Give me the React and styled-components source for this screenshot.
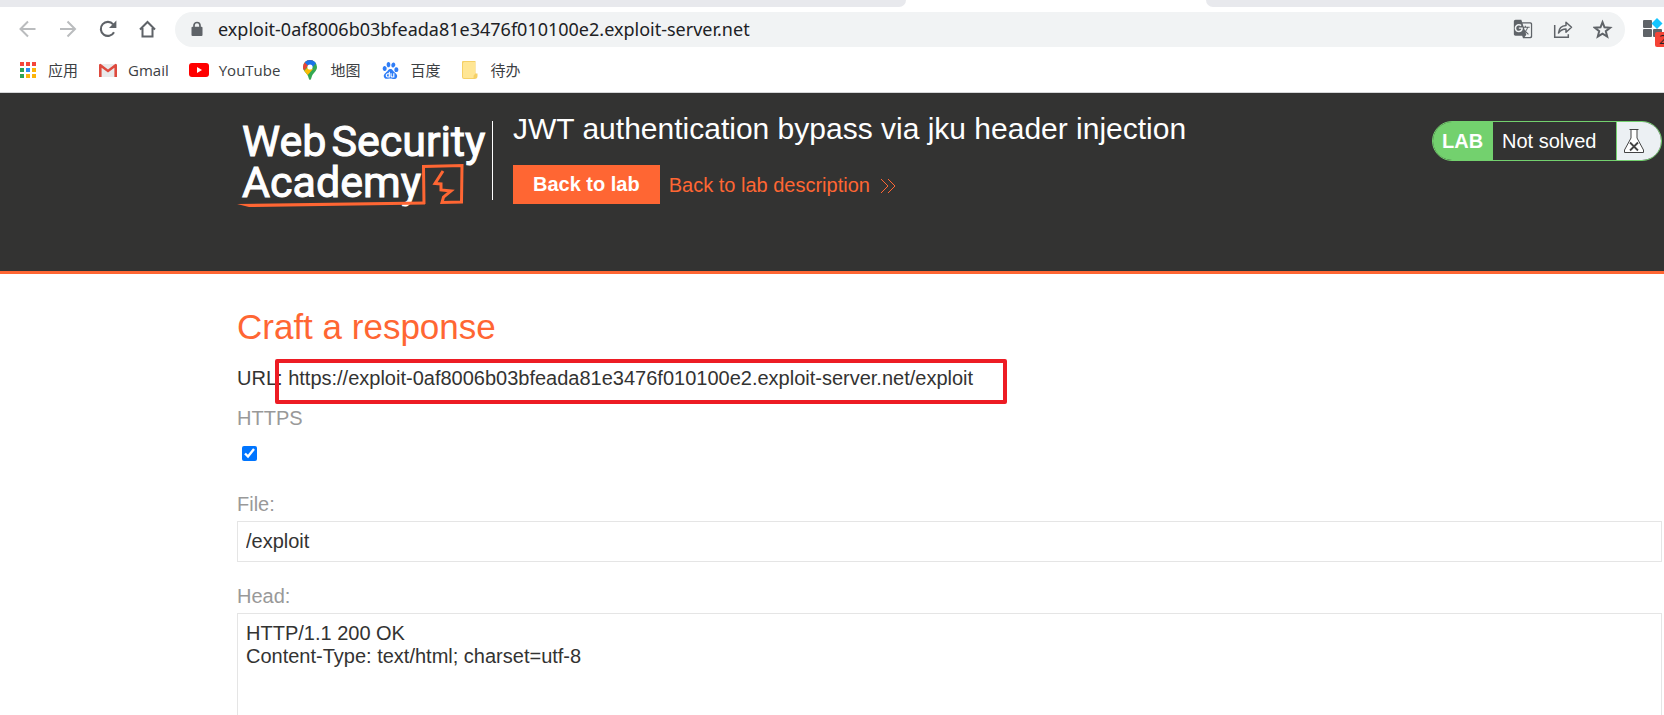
import React from "react";
import styled, { createGlobalStyle } from "styled-components";
import { MdGTranslate } from "react-icons/md";
import { SiBaidu } from "react-icons/si";

const orange = "#ff6633";
const green = "#73d16e";

const GlobalStyle = createGlobalStyle`
  *, *::before, *::after { box-sizing: border-box; }
  body {
    margin: 0;
    background: #fff;
    color: #333332;
    font-family: "Liberation Sans", Arial, sans-serif;
    font-size: 20px;
    line-height: 23px;
  }
`;

const Window = styled.div`
  display: flex;
  flex-direction: column;
  height: 100vh;
  overflow: hidden;
`;

const TabStrip = styled.div`
  display: flex;
  justify-content: space-between;
  flex: none;
  height: 7px;
`;

const TabEdge = styled.div`
  background: #e8e9ed;
  flex: ${(p) => p.$grow} 1 0;
  border-radius: ${(p) => (p.$side === "left" ? "0 0 12px 0" : "0 0 0 12px")};
`;

const ActiveTab = styled.div`
  flex: 0 0 300px;
`;

const Toolbar = styled.div`
  display: flex;
  align-items: center;
  flex: none;
  height: 45px;
  padding-left: 18px;
`;

const NavButtons = styled.div`
  display: flex;
  gap: 20px;
  padding: 0 17px 2px 0;
`;

const IconButton = styled.button`
  display: grid;
  place-items: center;
  width: 20px;
  height: 20px;
  padding: 0;
  border: 0;
  background: none;
  color: ${(p) => (p.$muted ? "#babcbe" : "#5f6368")};
`;

const Omnibox = styled.div`
  display: flex;
  align-items: center;
  flex: 1;
  min-width: 0;
  height: 35px;
  padding: 0 12px 2px 16px;
  gap: 15px;
  border-radius: 18px;
  background: #f1f3f4;
`;

const Address = styled.input`
  flex: 1;
  min-width: 0;
  padding: 0;
  border: 0;
  outline: 0;
  background: none;
  color: #202124;
  font: 18px/24px "Noto Sans", "Open Sans", sans-serif;
`;

const OmniActions = styled.div`
  display: flex;
  gap: 20px;
`;

const Extensions = styled.button`
  position: relative;
  flex: none;
  width: 39px;
  height: 35px;
  padding: 0 0 0 18px;
  border: 0;
  background: none;
  overflow: hidden;
  text-align: left;
`;

const Badge = styled.span`
  position: absolute;
  left: 30px;
  top: 20px;
  width: 20px;
  height: 15px;
  padding-left: 4px;
  border-radius: 2px;
  background: #f44336;
  color: #202124;
  font: 13px/15px "Open Sans", sans-serif;
`;

const Bookmarks = styled.nav`
  display: flex;
  align-items: center;
  flex: none;
  gap: 20px;
  height: 41px;
  padding: 0 18px 5px;
  border-bottom: 1px solid #d5d6d8;
`;

const Bookmark = styled.a`
  display: flex;
  align-items: center;
  gap: 10px;
  color: #3c4043;
  font: 15px/20px "Open Sans", "Noto Sans CJK SC", sans-serif;
  text-decoration: none;
  white-space: nowrap;
`;

const LabHeader = styled.header`
  display: flex;
  flex: none;
  height: 181px;
  padding: 20px 2px 0 237px;
  border-bottom: 3px solid ${orange};
  background: #333332;
`;

const Logo = styled.a`
  position: relative;
  flex: none;
  width: 256px;
  height: 79px;
  margin-top: 8px;
  padding-left: 5px;
  border-right: 1px solid #fff;
  color: #fff;
  font: 43px/41px "Roboto", sans-serif;
  -webkit-text-stroke: 1px #fff;
  text-decoration: none;
  white-space: nowrap;
`;

const LogoLine = styled.span`
  display: flex;
  gap: 5px;
`;

const LogoMark = styled.svg`
  position: absolute;
  left: 0;
  top: 40px;
`;

const LabInfo = styled.div`
  flex: 1;
  padding-left: 20px;
`;

const LabTitle = styled.h2`
  margin: 0;
  color: #fff;
  font-size: 30px;
  font-weight: 400;
  line-height: 32px;
`;

const LabActions = styled.div`
  display: flex;
  align-items: center;
  gap: 9px;
  margin-top: 20px;
`;

const Button = styled.button`
  height: 39px;
  padding: 0 20px;
  border: 0;
  background: ${orange};
  color: #fff;
  font: bold 20px/23px "Liberation Sans", Arial, sans-serif;
`;

const DescriptionLink = styled.a`
  display: flex;
  align-items: center;
  gap: 10px;
  padding-top: 2px;
  color: ${orange};
  text-decoration: none;
`;

const Status = styled.div`
  display: flex;
  flex: none;
  width: 230px;
  height: 40px;
  margin-top: 8px;
  border: 1px solid ${green};
  border-radius: 20px;
  overflow: hidden;
  color: #fff;
  line-height: 38px;
`;

const StatusTag = styled.strong`
  flex: none;
  width: 60px;
  padding-left: 9px;
  background: ${green};
`;

const StatusText = styled.span`
  flex: 1;
  padding-left: 9px;
`;

const StatusIcon = styled.span`
  display: flex;
  align-items: center;
  width: 45px;
  padding-left: 6px;
  border-left: 1px solid ${green};
  background: #ecf0f3;
`;

const Content = styled.main`
  flex: none;
  padding: 32px 2px 0 237px;
`;

const Heading = styled.h1`
  margin: 0;
  color: ${orange};
  font-size: 35px;
  font-weight: 400;
  line-height: 42px;
`;

const UrlLine = styled.p`
  margin: 19px 0 17px;
`;

const UrlValue = styled.span`
  position: relative;
`;

const Highlight = styled.span`
  position: absolute;
  inset: -8px -34px -15px -13px;
  border: 4px solid #ed1c24;
  border-radius: 2px;
`;

const Label = styled.label`
  display: block;
  color: #999;
`;

const Checkbox = styled.input`
  display: block;
  width: 15px;
  height: 15px;
  margin: 16px 5px 32px;
  accent-color: #0075ff;
`;

const Field = styled.div`
  display: flex;
  flex-direction: column;
  gap: 5px;
  margin-bottom: 23px;
`;

const TextInput = styled.input`
  width: 100%;
  height: 41px;
  padding: 0 8px;
  border: 1px solid #e5e5e5;
  background: #fff;
  color: #333332;
  font: inherit;
`;

const TextArea = styled.textarea`
  width: 100%;
  height: 240px;
  padding: 8px;
  border: 1px solid #e5e5e5;
  background: #fff;
  color: #333332;
  font: inherit;
  resize: none;
`;

const Stroke = ({ d, width = 2 }) => (
  <svg width="20" height="20" viewBox="0 0 20 20" fill="none" stroke="currentColor" strokeWidth={width}>
    <path d={d} />
  </svg>
);

const ReloadIcon = () => (
  <svg width="20" height="20" viewBox="0 0 20 20">
    <path d="M16 13.2A7 7 0 1 1 15.2 5.4" fill="none" stroke="currentColor" strokeWidth="2.1" />
    <path d="M18.4 1.6V9H11Z" fill="currentColor" />
  </svg>
);

const LockIcon = () => (
  <svg width="12" height="16" viewBox="0 0 12 16">
    <path d="M3 7V4.5a3 3 0 0 1 6 0V7" fill="none" stroke="#5f6368" strokeWidth="1.7" />
    <rect x=".5" y="5.8" width="11" height="9.2" rx="1" fill="#5f6368" />
  </svg>
);

const AppsIcon = () => {
  const colors = ["#f4453a", "#f4453a", "#f4453a", "#2da355", "#2a8cf4", "#fcb40a", "#2da355", "#fcb40a", "#fcb40a"];
  return (
    <svg width="20" height="20" viewBox="0 0 20 20">
      {colors.map((c, i) => (
        <rect key={i} x={2 + (i % 3) * 6} y={2 + Math.floor(i / 3) * 6} width="4" height="4" fill={c} />
      ))}
    </svg>
  );
};

const GmailIcon = () => (
  <svg width="20" height="20" viewBox="0 0 20 20">
    <path d="M2 4h16v13H2z" fill="#e9eaeb" />
    <path d="M1 17V4.5L2.5 3.7 10 9.5l7.5-5.8L19 4.5V17h-2.600V7.700L10 12.600 3.600 7.700V17Z" fill="#de4a3e" />
  </svg>
);

const YouTubeIcon = () => (
  <svg width="20" height="20" viewBox="0 0 20 20">
    <rect y="3" width="20" height="14" rx="3" fill="#f00" />
    <path d="M8 7v6l5-3z" fill="#fff" />
  </svg>
);

const MapsIcon = () => (
  <svg width="20" height="20" viewBox="0 0 20 20">
    <defs>
      <clipPath id="pin">
        <path d="M10 0a7 7 0 0 1 7 7c0 4-3.500 5.500-5 9-.6 1.500-.8 4-2 4s-1.400-2.500-2-4c-1.500-3.500-5-5-5-9a7 7 0 0 1 7-7Z" />
      </clipPath>
    </defs>
    <g clipPath="url(#pin)">
      <path d="M0 0h20v20H0z" fill="#34a853" />
      <path d="M0 15 14-1H0z" fill="#ea4335" />
      <path d="M3 12 8 7l5 2-7 8z" fill="#fbbc04" />
      <path d="M4.600 2.500 8 5.500 11 9l6-7-5-3H6Z" fill="#1a73e8" />
    </g>
    <circle cx="10" cy="7" r="2.600" fill="#fff" />
  </svg>
);

const BaiduIcon = () => (
  <svg width="20" height="20" viewBox="0 0 20 20">
    <SiBaidu x="2" y="2" size={17} color="#2f7df6" />
  </svg>
);

const NoteIcon = () => (
  <svg width="20" height="20" viewBox="0 0 20 20">
    <path d="M3 1h12.500v12.500h2V16q0 3-3 3H4q-2 0-2-2V2q0-1 1-1Z" fill="#f5d066" />
    <path d="M4 2h11v12q-2 1-1.500 4H4q-1 0-1-1V3z" fill="#ffe694" />
  </svg>
);

const ShareIcon = () => (
  <svg width="20" height="20" viewBox="0 0 20 20" fill="none" stroke="currentColor" strokeWidth="1.500">
    <path d="M1.700 6v12.200h13.600v-3" />
    <path d="M5.500 14c.5-5 3.500-7.300 7.500-7.500V3.200l5.500 5-5.500 5V10c-3.500 0-5.500 1.300-7.500 4Z" strokeLinejoin="round" />
  </svg>
);

const ExtensionIcon = () => (
  <svg width="21" height="20" viewBox="0 0 21 20">
    <rect x="0" y="2" width="9" height="8" rx="1" fill="#5f6368" />
    <rect x="0" y="11" width="9" height="8" rx="1" fill="#5f6368" />
    <rect x="10" y="11" width="9" height="8" rx="1" fill="#5f6368" />
    <path d="m14 0 5.500 5.500L14 11 8.500 5.500Z" fill="#15c5ff" />
  </svg>
);

const FlaskIcon = () => (
  <svg width="22" height="26" viewBox="0 0 22 26" fill="none" stroke="#444" strokeWidth="1">
    <path d="M8 1.500v8.500L1.500 22v2.500h19V22L14 10V1.500" fill="#fff" />
    <path d="M6.500 1.500h9" />
    <path d="m7 14.500 8 8m0-8-8 8" strokeWidth="1.800" />
  </svg>
);

export default function App() {
  return (
    <>
      <GlobalStyle />
      <Window>
        <TabStrip>
          <TabEdge $side="left" $grow={906} />
          <ActiveTab />
          <TabEdge $side="right" $grow={458} />
        </TabStrip>
        <Toolbar>
          <NavButtons>
            <IconButton $muted aria-label="Back"><Stroke d="M17.500 10H2.500M10 2.500 2.500 10l7.500 7.500" /></IconButton>
            <IconButton $muted aria-label="Forward"><Stroke d="M2 10h15M9.500 2.500 17 10l-7.500 7.500" /></IconButton>
            <IconButton aria-label="Reload"><ReloadIcon /></IconButton>
            <IconButton aria-label="Home"><Stroke d="M2 10.500 9.500 3l7.500 7.500M4.500 9v8.500h10V9" /></IconButton>
          </NavButtons>
          <Omnibox>
            <LockIcon />
            <Address
              aria-label="Address"
              defaultValue="exploit-0af8006b03bfeada81e3476f010100e2.exploit-server.net"
            />
            <OmniActions>
              <IconButton aria-label="Translate"><MdGTranslate size={20} /></IconButton>
              <IconButton aria-label="Share"><ShareIcon /></IconButton>
              <IconButton aria-label="Bookmark">
                <Stroke d="m9.500 3.200 2 5.100 5.600.4-4.300 3.500 1.400 5.400-4.700-3-4.700 3 1.400-5.400-4.300-3.500 5.600-.4Z" />
              </IconButton>
            </OmniActions>
          </Omnibox>
          <Extensions aria-label="Extensions">
            <ExtensionIcon />
            <Badge>2</Badge>
          </Extensions>
        </Toolbar>
        <Bookmarks>
          <Bookmark href="#"><AppsIcon />应用</Bookmark>
          <Bookmark href="#"><GmailIcon />Gmail</Bookmark>
          <Bookmark href="#"><YouTubeIcon />YouTube</Bookmark>
          <Bookmark href="#"><MapsIcon />地图</Bookmark>
          <Bookmark href="#"><BaiduIcon />百度</Bookmark>
          <Bookmark href="#"><NoteIcon />待办</Bookmark>
        </Bookmarks>

        <LabHeader>
          <Logo href="#">
            <LogoLine>
              <span>Web</span>
              <span>Security</span>
            </LogoLine>
            <LogoLine>Academy</LogoLine>
            <LogoMark width="232" height="50" viewBox="0 0 232 50" fill="none" stroke={orange} strokeWidth="3">
              <path d="M0 43 188 40.500v3L12 46Z" fill={orange} stroke="none" />
              <path d="M187 43 186.500 5.500 225 4.500 224.500 41 205 41.500 206.500 36 214 30 204 29V23L198 22.500 206 10" />
            </LogoMark>
          </Logo>
          <LabInfo>
            <LabTitle>JWT authentication bypass via jku header injection</LabTitle>
            <LabActions>
              <Button>Back to lab</Button>
              <DescriptionLink href="#">
                Back to lab description
                <svg width="16" height="16" viewBox="0 0 16 16" fill="none" stroke="currentColor">
                  <path d="m1 1 7 7-7 7M8 1l7 7-7 7" />
                </svg>
              </DescriptionLink>
            </LabActions>
          </LabInfo>
          <Status>
            <StatusTag>LAB</StatusTag>
            <StatusText>Not solved</StatusText>
            <StatusIcon><FlaskIcon /></StatusIcon>
          </Status>
        </LabHeader>

        <Content>
          <Heading>Craft a response</Heading>
          <UrlLine>
            URL:{" "}
            <UrlValue>
              https://exploit-0af8006b03bfeada81e3476f010100e2.exploit-server.net/exploit
              <Highlight />
            </UrlValue>
          </UrlLine>
          <Label htmlFor="https">HTTPS</Label>
          <Checkbox id="https" type="checkbox" defaultChecked />
          <Field>
            <Label htmlFor="file">File:</Label>
            <TextInput id="file" defaultValue="/exploit" />
          </Field>
          <Field>
            <Label htmlFor="head">Head:</Label>
            <TextArea id="head" defaultValue={"HTTP/1.1 200 OK\nContent-Type: text/html; charset=utf-8"} />
          </Field>
        </Content>
      </Window>
    </>
  );
}
